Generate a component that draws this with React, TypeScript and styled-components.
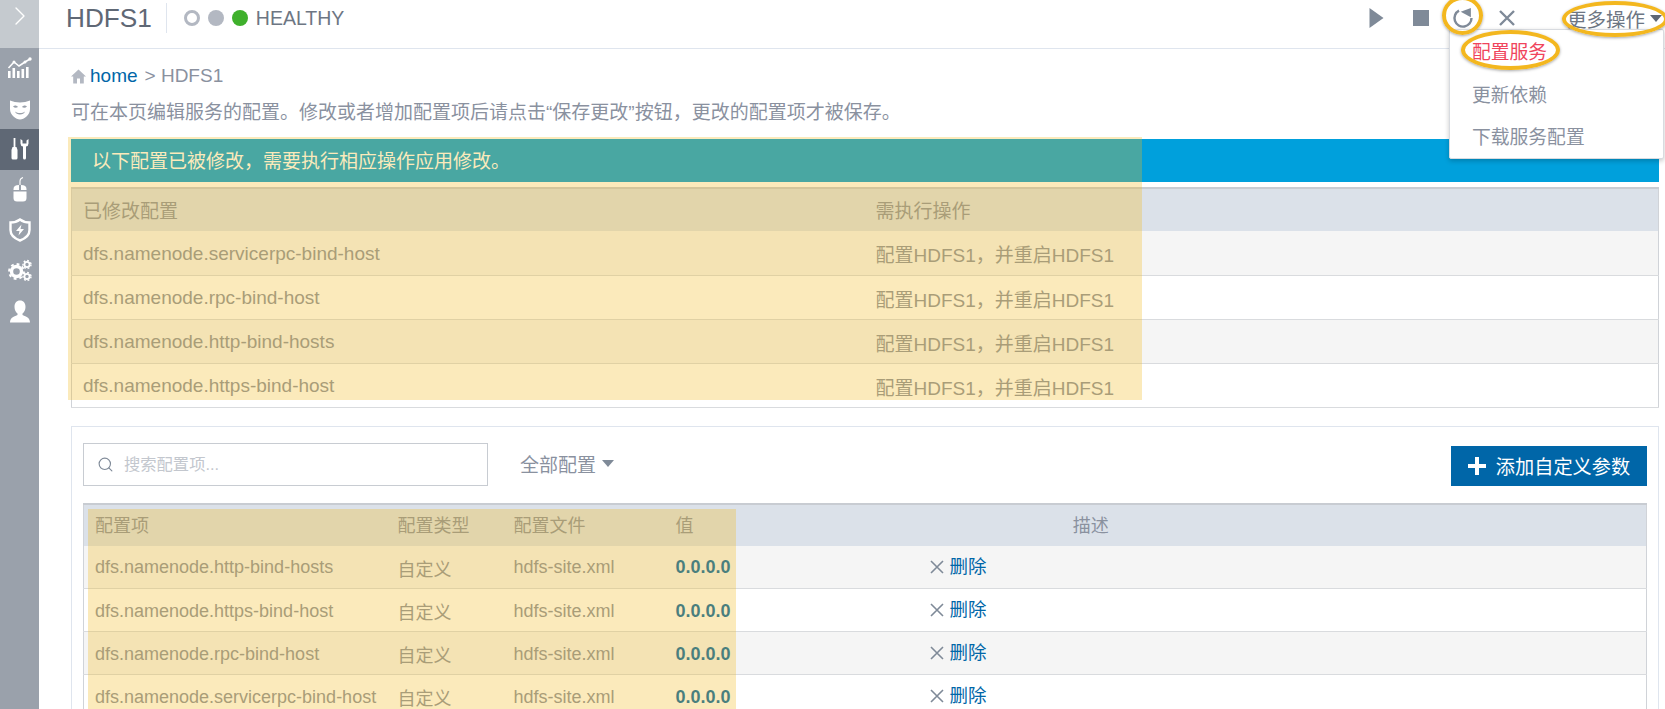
import React from "react";
import styled, { createGlobalStyle } from "styled-components";
import { ChevronRight, Search } from "lucide-react";

const Global = createGlobalStyle`
  html, body { margin: 0; padding: 0; height: 709px; overflow: hidden; background: #fff; }
  #root { height: 709px; }
  * { box-sizing: border-box; }
  body { font-family: "Liberation Sans", "Noto Sans CJK SC", sans-serif; color: #8a919f; }
`;

const Shell = styled.div`
  position: relative;
  display: flex;
  width: 1665px;
  height: 709px;
  overflow: hidden;
`;
const Sidebar = styled.nav`
  width: 39px;
  flex: none;
  display: flex;
  flex-direction: column;
  background: #9aa1ab;
`;
const Toggle = styled.div`
  height: 48px;
  background: #c5cacf;
  color: #fff;
  display: flex;
  justify-content: center;
  align-items: flex-start;
`;
const NavItem = styled.div<{ $active?: boolean }>`
  height: 40.5px;
  display: flex;
  align-items: center;
  justify-content: center;
  background: ${(p) => (p.$active ? "#5f6875" : "transparent")};
  color: #fff;
`;
const Main = styled.div`
  flex: 1;
  min-width: 0;
  display: flex;
  flex-direction: column;
`;
const Header = styled.header`
  height: 49px;
  flex: none;
  display: flex;
  align-items: center;
  padding: 0 0 12px 27px;
  border-bottom: 1px solid #dfe5ee;
`;
const Title = styled.h1`
  margin: 0;
  font-size: 26.2px;
  font-weight: 400;
  color: #5f6875;
  line-height: 30px;
  padding-right: 14px;
  border-right: 1px solid #dfe5ee;
`;
const Lights = styled.div`
  display: flex;
  align-items: center;
  gap: 8px;
  margin-left: 17px;
`;
const Light = styled.span<{ $kind: "ring" | "grey" | "green" }>`
  width: 16px;
  height: 16px;
  border-radius: 50%;
  background: ${(p) => (p.$kind === "grey" ? "#b3b8c2" : p.$kind === "green" ? "#3fb02c" : "#fff")};
  border: ${(p) => (p.$kind === "ring" ? "3px solid #b3b8c2" : "none")};
`;
const Status = styled.span`
  margin-left: 8px;
  font-size: 19.5px;
  color: #6d7683;
`;
const Actions = styled.div`
  margin-left: auto;
  display: flex;
  align-items: center;
  height: 36px;
  color: #7f8a98;
`;
const ActionSlot = styled.span<{ $w: number }>`
  width: ${(p) => p.$w}px;
  display: flex;
  justify-content: center;
  align-items: center;
`;
const More = styled.span`
  display: flex;
  align-items: center;
  gap: 5px;
  font-size: 19.5px;
  color: #6d7683;
  margin-left: 36px;
  margin-right: 3px;
`;
const Caret = styled.i<{ $c: string }>`
  display: inline-block;
  width: 0;
  height: 0;
  border-left: 6px solid transparent;
  border-right: 6px solid transparent;
  border-top: 7px solid ${(p) => p.$c};
`;
const Menu = styled.ul`
  position: absolute;
  left: 1449px;
  top: 29px;
  width: 215px;
  height: 130px;
  margin: 0;
  padding: 2px 0 0 22px;
  list-style: none;
  background: #fff;
  border: 1px solid #d8dbe0;
  border-radius: 2px;
  box-shadow: 0 2px 5px rgba(0, 0, 0, 0.22);
  z-index: 2;
`;
const MenuItem = styled.li<{ $danger?: boolean }>`
  height: 42.5px;
  line-height: 42px;
  font-size: 18.8px;
  color: ${(p) => (p.$danger ? "#f0445c" : "#8a919f")};
`;
const Content = styled.main`
  flex: 1;
  min-height: 0;
  padding: 0 6px 0 32px;
`;
const Crumbs = styled.div`
  display: flex;
  align-items: center;
  height: 24px;
  margin-top: 15px;
  font-size: 19px;
  color: #8a919f;
`;
const Home = styled.a`
  color: #0066a8;
  margin: 0 7px 0 4px;
`;
const Intro = styled.p`
  margin: 13px 0 0;
  height: 24px;
  line-height: 24px;
  font-size: 19px;
  color: #8a919f;
  white-space: nowrap;
`;
const Banner = styled.div`
  margin-top: 14px;
  height: 43px;
  line-height: 45px;
  padding-left: 21px;
  background: #00a0dc;
  color: #fff;
  font-size: 19px;
  font-weight: 400;
`;
const Table = styled.table<{ $top: number; $size: number }>`
  width: 100%;
  border-collapse: collapse;
  table-layout: fixed;
  font-size: ${(p) => p.$size}px;
  color: #8a919f;
  border-top: 2px solid #c8ccd2;
  border-left: 1px solid #d0d3d8;
  border-right: 1px solid #d0d3d8;
  margin-top: ${(p) => p.$top}px;
`;
const Th = styled.th<{ $center?: boolean; $h: number }>`
  height: ${(p) => p.$h}px;
  background: #dbe1e9;
  font-weight: 400;
  padding: 0 ${(p) => (p.$center ? "212px" : "0")} 2px 11px;
  text-align: ${(p) => (p.$center ? "center" : "left")};
`;
const Row = styled.tr<{ $h: number }>`
  height: ${(p) => p.$h}px;
  border-bottom: 1px solid #d9dbde;
  &:nth-child(odd) { background: #f5f5f5; }
`;
const Td = styled.td`
  padding: 2px 0 0 11px;
  white-space: nowrap;
  overflow: hidden;
`;
const Card = styled.section`
  margin-top: 18px;
  height: 400px;
  border: 1px solid #dfe5ee;
  border-bottom: 0;
  padding: 16px 11px 0;
`;
const Toolbar = styled.div`
  display: flex;
  align-items: center;
  height: 43px;
`;
const SearchBox = styled.label`
  width: 405px;
  height: 43px;
  display: flex;
  align-items: center;
  gap: 8px;
  padding-left: 13px;
  border: 1px solid #c8ccd2;
  color: #7f8a98;
`;
const SearchInput = styled.input`
  border: 0;
  outline: 0;
  flex: 1;
  font: 400 16.3px "Liberation Sans", "Noto Sans CJK SC", sans-serif;
  color: #8a919f;
  background: transparent;
  padding: 0 2px;
  &::placeholder { color: #c3c7ce; opacity: 1; }
`;
const Filter = styled.span`
  margin-left: 32px;
  margin-bottom: 2px;
  display: flex;
  align-items: center;
  gap: 6px;
  font-size: 19px;
  color: #8a919f;
`;
const AddButton = styled.button`
  margin-left: auto;
  margin-top: 3px;
  width: 196px;
  height: 40px;
  display: flex;
  align-items: center;
  justify-content: center;
  gap: 10px;
  border: 0;
  padding: 0;
  background: #0066a8;
  color: #fff;
  font: 400 19.2px "Liberation Sans", "Noto Sans CJK SC", sans-serif;
`;
const Value = styled.b`
  color: #0066a8;
  font-size: 18px;
`;
const Remove = styled.a`
  display: inline-flex;
  align-items: center;
  gap: 6px;
  margin-left: 182px;
  color: #0066a8;
  font-size: 18.5px;
  line-height: 20px;
  svg { color: #7f8a98; }
`;
const Highlight = styled.div<{ $x: number; $y: number; $w: number; $h: number }>`
  position: absolute;
  left: ${(p) => p.$x}px;
  top: ${(p) => p.$y}px;
  width: ${(p) => p.$w}px;
  height: ${(p) => p.$h}px;
  background: rgba(243, 187, 30, 0.3);
  pointer-events: none;
  z-index: 3;
`;
const Ring = styled.div<{ $x: number; $y: number; $w: number; $h: number }>`
  position: absolute;
  left: ${(p) => p.$x}px;
  top: ${(p) => p.$y}px;
  width: ${(p) => p.$w}px;
  height: ${(p) => p.$h}px;
  border: 4.5px solid #f3b71f;
  border-radius: 50%;
  box-shadow: 0 1px 3px rgba(0, 0, 0, 0.35);
  pointer-events: none;
  z-index: 4;
`;

const ChartIcon = () => (
  <svg width="26" height="22" viewBox="0 0 26 22" fill="currentColor">
    <rect x="1" y="14" width="2.6" height="7" />
    <rect x="5.5" y="11" width="2.6" height="10" />
    <rect x="10" y="14" width="2.6" height="7" />
    <rect x="14.5" y="12" width="2.6" height="9" />
    <rect x="19" y="10" width="2.6" height="11" />
    <path d="M1.5 11 L7 5 L12 9 L18 5 L23 2" fill="none" stroke="currentColor" strokeWidth="1.6" />
    <circle cx="7" cy="5" r="1.5" />
    <circle cx="18" cy="5" r="1.5" />
    <circle cx="23" cy="2" r="1.7" />
  </svg>
);
const MaskIcon = () => (
  <svg width="22" height="22" viewBox="0 0 22 22">
    <path fill="currentColor" d="M1 2.5 C7 5 15 5 21 2.5 L21 11 C21 17 15 21.5 11 21.5 C7 21.5 1 17 1 11 Z" />
    <path fill="#9aa1ab" d="M4 8.5 C5.5 7 7.5 7 9 9 C7.5 10 5.5 10 4 8.5 Z M13 9 C14.5 7 16.5 7 18 8.5 C16.5 10 14.5 10 13 9 Z M6 13.5 C9 15.5 13 15.5 16 13.5 C15 17.5 7 17.5 6 13.5 Z" />
  </svg>
);
const ToolsIcon = () => (
  <svg width="20" height="22" viewBox="0 0 20 22" fill="currentColor">
    <rect x="3.6" y="0" width="1.8" height="9" />
    <path d="M2.5 9 H6.5 L7.5 12 V20 Q7.5 21.5 6 21.5 H3 Q1.5 21.5 1.5 20 V12 Z" />
    <path d="M10.5 1 V5.5 Q10.5 8 13 8.5 V20 Q13 21.5 14.5 21.5 Q16 21.5 16 20 V8.5 Q18.5 8 18.5 5.5 V1 L16.5 2.5 V5.5 H12.5 V2.5 Z" />
  </svg>
);
const MouseIcon = () => (
  <svg width="16" height="25" viewBox="0 0 16 25" fill="currentColor">
    <path d="M8 8 V4 Q8 1.5 11 0.5" fill="none" stroke="currentColor" strokeWidth="1.1" />
    <path d="M1.5 13 V12 Q1.5 8 7 8 V13 Z M9 8 Q14.5 8 14.5 12 V13 H9 Z" />
    <path d="M1.5 14.5 H14.5 V21 Q14.5 24.5 11 24.5 H5 Q1.5 24.5 1.5 21 Z" />
  </svg>
);
const ShieldIcon = () => (
  <svg width="22" height="24" viewBox="0 0 22 24">
    <path fill="none" stroke="currentColor" strokeWidth="2.4" d="M11 1.5 Q15 4.5 20.5 4.5 V12 Q20.5 19 11 22.5 Q1.5 19 1.5 12 V4.5 Q7 4.5 11 1.5 Z" />
    <path fill="currentColor" d="M12.5 6.5 L7 13 H10.5 L9.5 17.5 L15 11 H11.5 Z" />
  </svg>
);
const GearsIcon = () => (
  <svg width="24" height="23" viewBox="0 0 24 23">
    <circle cx="8.5" cy="12.5" r="5" fill="none" stroke="currentColor" strokeWidth="3.4" />
    <circle cx="8.5" cy="12.5" r="7.4" fill="none" stroke="currentColor" strokeWidth="2" strokeDasharray="2.8 3" />
    <circle cx="19" cy="5.5" r="2.6" fill="none" stroke="currentColor" strokeWidth="1.8" />
    <circle cx="19" cy="5.5" r="4" fill="none" stroke="currentColor" strokeWidth="1.4" strokeDasharray="1.8 1.9" />
    <circle cx="19" cy="17.5" r="2.6" fill="none" stroke="currentColor" strokeWidth="1.8" />
    <circle cx="19" cy="17.5" r="4" fill="none" stroke="currentColor" strokeWidth="1.4" strokeDasharray="1.8 1.9" />
  </svg>
);
const UserIcon = () => (
  <svg width="22" height="23" viewBox="0 0 22 23" fill="currentColor">
    <path d="M11 0.5 C14.5 0.5 16.5 3 16.5 7 C16.5 10 15 12.5 13.5 13.5 V15 C16 16.5 21 17 21 22.5 H1 C1 17 6 16.5 8.5 15 V13.5 C7 12.5 5.5 10 5.5 7 C5.5 3 7.5 0.5 11 0.5 Z" />
  </svg>
);
const HomeIcon = () => (
  <svg width="15" height="15" viewBox="0 0 15 15" fill="#b3b8c2">
    <path d="M7.5 0.5 L15 7.5 H12.8 V14.5 H9 V9.5 H6 V14.5 H2.2 V7.5 H0 Z" />
  </svg>
);
const PlayIcon = () => (
  <svg width="15" height="20" viewBox="0 0 15 20" fill="currentColor"><path d="M0.5 0 L14.5 10 L0.5 20 Z" /></svg>
);
const StopIcon = () => (
  <svg width="16" height="16" viewBox="0 0 16 16" fill="currentColor"><rect width="16" height="16" /></svg>
);
const RefreshIcon = () => (
  <svg width="22" height="22" viewBox="0 0 22 22">
    <path d="M7 3.6 A8.5 8.5 0 1 0 19.5 11" fill="none" stroke="currentColor" strokeWidth="2.4" />
    <path d="M8.7 4.7 L18.9 1 L18.9 10.3 Z" fill="currentColor" />
  </svg>
);
const Cross = ({ size, weight }: { size: number; weight: number }) => (
  <svg width={size} height={size} viewBox={`0 0 ${size} ${size}`} stroke="currentColor" strokeWidth={weight}>
    <path d={`M1 1 L${size - 1} ${size - 1} M${size - 1} 1 L1 ${size - 1}`} />
  </svg>
);
const PlusGlyph = () => (
  <svg width="18" height="18" viewBox="0 0 18 18" fill="#fff">
    <rect x="7" y="0" width="4" height="18" />
    <rect x="0" y="7" width="18" height="4" />
  </svg>
);

const changed = ["dfs.namenode.servicerpc-bind-host", "dfs.namenode.rpc-bind-host", "dfs.namenode.http-bind-hosts", "dfs.namenode.https-bind-host"];
const custom = ["dfs.namenode.http-bind-hosts", "dfs.namenode.https-bind-host", "dfs.namenode.rpc-bind-host", "dfs.namenode.servicerpc-bind-host"];

export default function App() {
  return (
    <Shell>
      <Global />
      <Sidebar>
        <Toggle><ChevronRight size={32} strokeWidth={1} /></Toggle>
        <NavItem><ChartIcon /></NavItem>
        <NavItem><MaskIcon /></NavItem>
        <NavItem $active><ToolsIcon /></NavItem>
        <NavItem><MouseIcon /></NavItem>
        <NavItem><ShieldIcon /></NavItem>
        <NavItem><GearsIcon /></NavItem>
        <NavItem><UserIcon /></NavItem>
      </Sidebar>
      <Main>
        <Header>
          <Title>HDFS1</Title>
          <Lights>
            <Light $kind="ring" />
            <Light $kind="grey" />
            <Light $kind="green" />
          </Lights>
          <Status>HEALTHY</Status>
          <Actions>
            <ActionSlot $w={44}><PlayIcon /></ActionSlot>
            <ActionSlot $w={44}><StopIcon /></ActionSlot>
            <ActionSlot $w={40}><RefreshIcon /></ActionSlot>
            <ActionSlot $w={48}><Cross size={16} weight={2.4} /></ActionSlot>
            <More>更多操作<Caret $c="#5f6875" /></More>
          </Actions>
        </Header>
        <Content>
          <Crumbs>
            <HomeIcon />
            <Home>home</Home>&gt;&nbsp;HDFS1
          </Crumbs>
          <Intro>可在本页编辑服务的配置。修改或者增加配置项后请点击“保存更改”按钮，更改的配置项才被保存。</Intro>
          <Banner>以下配置已被修改，需要执行相应操作应用修改。</Banner>
          <Table $top={5} $size={19}>
            <colgroup>
              <col width="793" />
              <col />
            </colgroup>
            <thead>
              <tr><Th $h={43}>已修改配置</Th><Th $h={43}>需执行操作</Th></tr>
            </thead>
            <tbody>
              {changed.map((name) => (
                <Row key={name} $h={44}>
                  <Td>{name}</Td>
                  <Td>配置HDFS1，并重启HDFS1</Td>
                </Row>
              ))}
            </tbody>
          </Table>
          <Card>
            <Toolbar>
              <SearchBox>
                <Search size={17} strokeWidth={1.6} />
                <SearchInput placeholder="搜索配置项..." readOnly />
              </SearchBox>
              <Filter>全部配置<Caret $c="#7f8a98" /></Filter>
              <AddButton><PlusGlyph />添加自定义参数</AddButton>
            </Toolbar>
            <Table $top={17} $size={18}>
              <colgroup>
                <col width="303" />
                <col width="116" />
                <col width="162" />
                <col width="72" />
                <col />
              </colgroup>
              <thead>
                <tr>
                  <Th $h={42}>配置项</Th>
                  <Th $h={42}>配置类型</Th>
                  <Th $h={42}>配置文件</Th>
                  <Th $h={42}>值</Th>
                  <Th $h={42} $center>描述</Th>
                </tr>
              </thead>
              <tbody>
                {custom.map((name) => (
                  <Row key={name} $h={43}>
                    <Td>{name}</Td>
                    <Td>自定义</Td>
                    <Td>hdfs-site.xml</Td>
                    <Td><Value>0.0.0.0</Value></Td>
                    <Td><Remove><Cross size={14} weight={1.6} />删除</Remove></Td>
                  </Row>
                ))}
              </tbody>
            </Table>
          </Card>
        </Content>
      </Main>
      <Menu>
        <MenuItem $danger>配置服务</MenuItem>
        <MenuItem>更新依赖</MenuItem>
        <MenuItem>下载服务配置</MenuItem>
      </Menu>
      <Highlight $x={68} $y={137} $w={1074} $h={263} />
      <Highlight $x={88} $y={509} $w={648} $h={200} />
      <Ring $x={1442} $y={-4} $w={41} $h={39} />
      <Ring $x={1562} $y={1} $w={106} $h={36} />
      <Ring $x={1461} $y={30} $w={99} $h={40} />
    </Shell>
  );
}
